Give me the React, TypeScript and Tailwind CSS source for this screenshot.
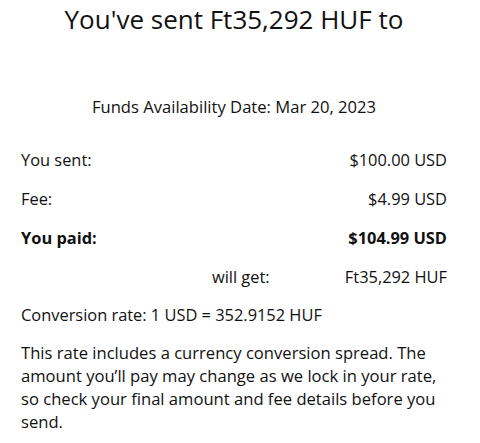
import React from "react";

function Row({ label, value, bold }: { label: React.ReactNode; value: string; bold?: boolean }) {
  return (
    <div className={`flex justify-between items-baseline h-[39px] leading-[39px] ${bold ? "font-bold" : ""}`}>
      <span>{label}</span>
      <span>{value}</span>
    </div>
  );
}

export default function App() {
  return (
    <div
      className="w-[480px] h-[443px] bg-white text-[#111] overflow-hidden pl-[21px] pr-[33px]"
      style={{ fontFamily: '"Open Sans", sans-serif' }}
    >
      <h1 className="text-center text-[26px] leading-[32px] pt-[3px] whitespace-nowrap">You've sent Ft35,292 HUF to</h1>
      <div className="h-[60px]" />
      <p className="text-center text-[16.6px] leading-[24px]">Funds Availability Date: Mar 20, 2023</p>
      <div className="text-[16.4px] mt-[21px]">
        <Row label="You sent:" value="$100.00 USD" />
        <Row label="Fee:" value="$4.99 USD" />
        <Row label="You paid:" value="$104.99 USD" bold />
        <Row label={<span className="pl-[191px]">will get:</span>} value="Ft35,292 HUF" />
        <p className="leading-[37px]">Conversion rate: 1 USD = 352.9152 HUF</p>
        <p className="leading-[23px] mt-[8px] text-[16.6px]">
          This rate includes a currency conversion spread. The amount you’ll pay may change as we lock in your rate, so check your final amount and fee details before you send.
        </p>
      </div>
    </div>
  );
}
